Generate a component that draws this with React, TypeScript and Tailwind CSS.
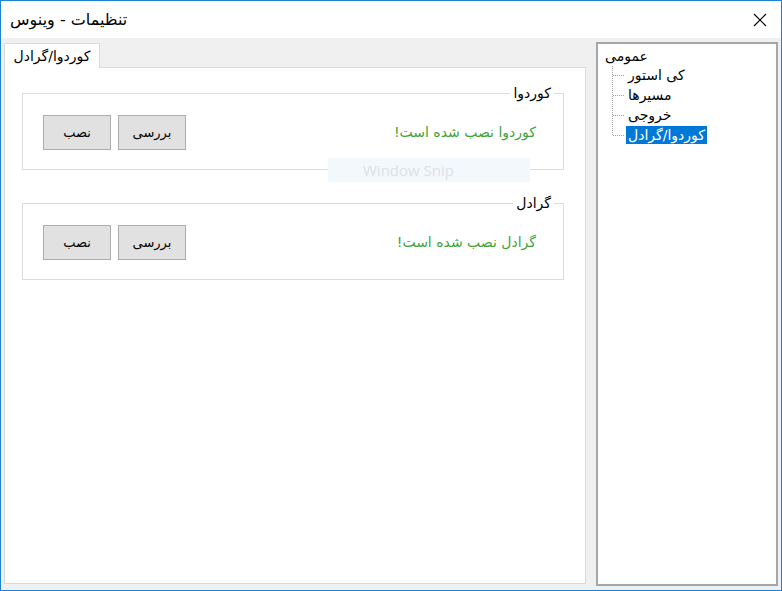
import React from 'react';

const fa = { fontFamily: '"DejaVu Sans", "Noto Sans", sans-serif' };

function GroupBox({ title, status, className }: { title: string; status: string; className?: string }) {
  return (
    <div className={`relative h-[77px] w-[542px] border border-[#dcdcdc] ${className ?? ''}`}>
      <span dir="rtl" className="absolute -top-[11px] right-[9px] bg-white px-[3px] text-[14px] leading-[20px] text-black">
        {title}
      </span>
      <div className="flex items-start pl-[20px] pr-[27px] pt-[21px]">
        <button className="h-[35px] w-[68px] border border-[#adadad] bg-[#e1e1e1] text-[13px] text-black">
          <span dir="rtl">نصب</span>
        </button>
        <button className="ml-[7px] h-[35px] w-[68px] border border-[#adadad] bg-[#e1e1e1] text-[13px] text-black">
          <span dir="rtl">بررسی</span>
        </button>
        <div className="flex h-[35px] flex-1 items-center justify-end">
          <span dir="rtl" className="text-[14px] text-[#3fa33a]">
            {status}
          </span>
        </div>
      </div>
    </div>
  );
}

function TreeLines() {
  return (
    <svg className="absolute left-0 top-0" width="40" height="150" fill="none">
      <g stroke="#a0a0a0" strokeWidth="1" strokeDasharray="1 1">
        <line x1="14.5" y1="22" x2="14.5" y2="92" />
        <line x1="15" y1="31.5" x2="27" y2="31.5" />
        <line x1="15" y1="51.5" x2="27" y2="51.5" />
        <line x1="15" y1="71.5" x2="27" y2="71.5" />
        <line x1="15" y1="91.5" x2="27" y2="91.5" />
      </g>
    </svg>
  );
}

export default function App() {
  const children = ['کی استور', 'مسیرها', 'خروجی'];
  return (
    <div className="relative flex h-[591px] w-[782px] flex-col border border-[#1883d7] bg-[#f0f0f0]" style={fa}>
      {/* title bar */}
      <div className="flex h-[37px] items-center justify-between bg-white pl-[9px] pr-[14px]">
        <span dir="rtl" className="text-[16px] text-black">
          تنظیمات - وینوس
        </span>
        <svg width="14" height="14" viewBox="0 0 14 14" className="mt-[1px]">
          <path d="M1 1 L13 13 M13 1 L1 13" stroke="#000" strokeWidth="1.1" />
        </svg>
      </div>

      {/* body */}
      <div className="flex flex-1 items-start pl-[3px] pt-[4px]">
        {/* tab control */}
        <div className="mt-[1px] flex h-[541px] w-[582px] flex-col">
          <div className="flex h-[24px]">
            <div className="relative z-10 -mb-px flex w-[96px] items-center justify-center border border-b-0 border-[#d9d9d9] bg-white">
              <span dir="rtl" className="text-[14px] text-black">
                کوردوا/گرادل
              </span>
            </div>
          </div>
          <div className="flex-1 border border-[#d9d9d9] bg-white pl-[17px] pt-[25px]">
            <GroupBox title="کوردوا" status="کوردوا نصب شده است!" />
            <GroupBox title="گرادل" status="گرادل نصب شده است!" className="mt-[33px]" />
          </div>
        </div>

        {/* tree view */}
        <div className="relative ml-[10px] h-[544px] w-[182px] border-2 border-[#a3a6ab] bg-white">
          <TreeLines />
          <div className="flex flex-col pl-[7px] pt-[3px] text-[14px] text-black">
            <div className="flex h-[18px] items-center">
              <span dir="rtl">عمومی</span>
            </div>
            <div className="flex flex-col pl-[21px]">
              {children.map((c) => (
                <div key={c} className="flex h-[20px] items-center pl-[2px]">
                  <span dir="rtl">{c}</span>
                </div>
              ))}
              <div className="flex h-[20px] items-center">
                <span dir="rtl" className="bg-[#0078d7] px-[2px] leading-[18px] text-white">
                  کوردوا/گرادل
                </span>
              </div>
            </div>
          </div>
        </div>
      </div>

      {/* snipping tool overlay */}
      <div className="absolute left-[327px] top-[157px] flex h-[24px] w-[202px] items-center bg-[#f3f8fc] pl-[35px]">
        <span className="text-[15px] text-[#dde1e5]" style={{ fontFamily: '"Open Sans", sans-serif' }}>
          Window Snip
        </span>
      </div>
    </div>
  );
}
